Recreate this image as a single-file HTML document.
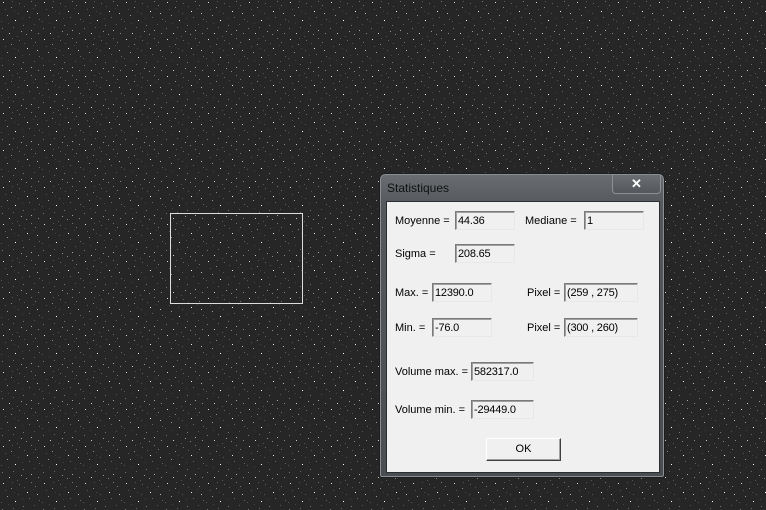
<!DOCTYPE html>
<html><head><meta charset="utf-8"><style>
html,body{margin:0;padding:0;width:766px;height:510px;overflow:hidden;background:#262626;font-family:"Liberation Sans",sans-serif}
.bg{position:absolute;left:0;top:0}
.rect{position:absolute;left:170px;top:213px;width:131px;height:89px;border:1px solid #ddd}
.win{position:absolute;left:379px;top:173px;width:284px;height:303px;border:1px solid #1c1f22;border-radius:6px 6px 3px 3px;background:linear-gradient(180deg,#6a6e72 0%,#55595d 10%,#4a4e52 100%);box-shadow:inset 0 0 0 1px #8a8e92}
.title{position:absolute;left:7px;top:7px;font-size:12px;color:#111}
.close{position:absolute;left:232px;top:1px;width:47px;height:18px;border:1px solid #8d9196;border-top:none;border-radius:0 0 4px 4px;background:linear-gradient(#6b6f74,#53575b);color:#fff;font-weight:bold;font-size:13px;text-align:center;line-height:17px}
.client{position:absolute;left:6px;top:27px;width:272px;height:270px;background:#f0f0f0;border:1px solid #2a2e33}
.l{position:absolute;font-size:11px;color:#000}
.f{position:absolute;height:19px;box-sizing:border-box;border:1px solid;border-color:#7a7a7a #e8e8e8 #e8e8e8 #7a7a7a;box-shadow:inset 1px 1px 0 #a0a0a0;background:#f0f0f0;font-size:11px;line-height:18px;padding-left:2px;color:#000;letter-spacing:-0.2px}
.ok{position:absolute;left:99px;top:236px;width:75px;height:23px;box-sizing:border-box;border:1px solid;border-color:#fff #404040 #404040 #fff;box-shadow:inset -1px -1px 0 #a0a0a0;font-size:11px;text-align:center;line-height:21px}
</style></head><body>
<svg class="bg" width="766" height="510"><defs><pattern id="n" width="41" height="37" patternUnits="userSpaceOnUse">
<rect x="3" y="2" width="1" height="1" fill="#ddd"/><rect x="11" y="7" width="1" height="1" fill="#888"/><rect x="19" y="3" width="1" height="1" fill="#666"/><rect x="27" y="11" width="1" height="1" fill="#eee"/><rect x="35" y="5" width="1" height="1" fill="#777"/><rect x="7" y="15" width="1" height="1" fill="#999"/><rect x="15" y="20" width="1" height="1" fill="#fff"/><rect x="23" y="25" width="1" height="1" fill="#777"/><rect x="31" y="30" width="1" height="1" fill="#aaa"/><rect x="39" y="19" width="1" height="1" fill="#666"/><rect x="2" y="28" width="1" height="1" fill="#777"/><rect x="9" y="33" width="1" height="1" fill="#ccc"/><rect x="18" y="13" width="1" height="1" fill="#555"/><rect x="26" y="34" width="1" height="1" fill="#888"/><rect x="34" y="24" width="1" height="1" fill="#555"/><rect x="5" y="9" width="1" height="1" fill="#555"/><rect x="13" y="27" width="1" height="1" fill="#666"/><rect x="21" y="31" width="1" height="1" fill="#999"/><rect x="29" y="17" width="1" height="1" fill="#666"/><rect x="37" y="13" width="1" height="1" fill="#bbb"/><rect x="24" y="6" width="1" height="1" fill="#555"/><rect x="31" y="1" width="1" height="1" fill="#777"/><rect x="12" y="1" width="1" height="1" fill="#555"/><rect x="1" y="21" width="1" height="1" fill="#555"/><rect x="38" y="33" width="1" height="1" fill="#888"/><rect x="17" y="36" width="1" height="1" fill="#555"/><rect x="8" y="23" width="1" height="1" fill="#444"/><rect x="22" y="18" width="1" height="1" fill="#444"/><rect x="33" y="8" width="1" height="1" fill="#444"/><rect x="14" y="11" width="1" height="1" fill="#444"/>
</pattern></defs><rect width="766" height="510" fill="url(#n)"/></svg>
<div class="rect"></div>
<div class="win">
<div class="title">Statistiques</div>
<div class="close">✕</div>
<div class="client">
<div class="l" style="left:8px;top:13px">Moyenne =</div><div class="f" style="left:68px;top:9px;width:60px">44.36</div>
<div class="l" style="left:138px;top:13px">Mediane =</div><div class="f" style="left:197px;top:9px;width:60px">1</div>
<div class="l" style="left:8px;top:46px">Sigma =</div><div class="f" style="left:68px;top:42px;width:60px">208.65</div>
<div class="l" style="left:8px;top:85px">Max. =</div><div class="f" style="left:45px;top:81px;width:60px">12390.0</div>
<div class="l" style="left:140px;top:85px">Pixel =</div><div class="f" style="left:177px;top:81px;width:74px">(259 , 275)</div>
<div class="l" style="left:8px;top:120px">Min. =</div><div class="f" style="left:45px;top:116px;width:60px">-76.0</div>
<div class="l" style="left:140px;top:120px">Pixel =</div><div class="f" style="left:177px;top:116px;width:74px">(300 , 260)</div>
<div class="l" style="left:8px;top:164px">Volume max. =</div><div class="f" style="left:84px;top:160px;width:63px">582317.0</div>
<div class="l" style="left:8px;top:202px">Volume min. =</div><div class="f" style="left:84px;top:198px;width:63px">-29449.0</div>
<div class="ok">OK</div>
</div></div>
</body></html>
